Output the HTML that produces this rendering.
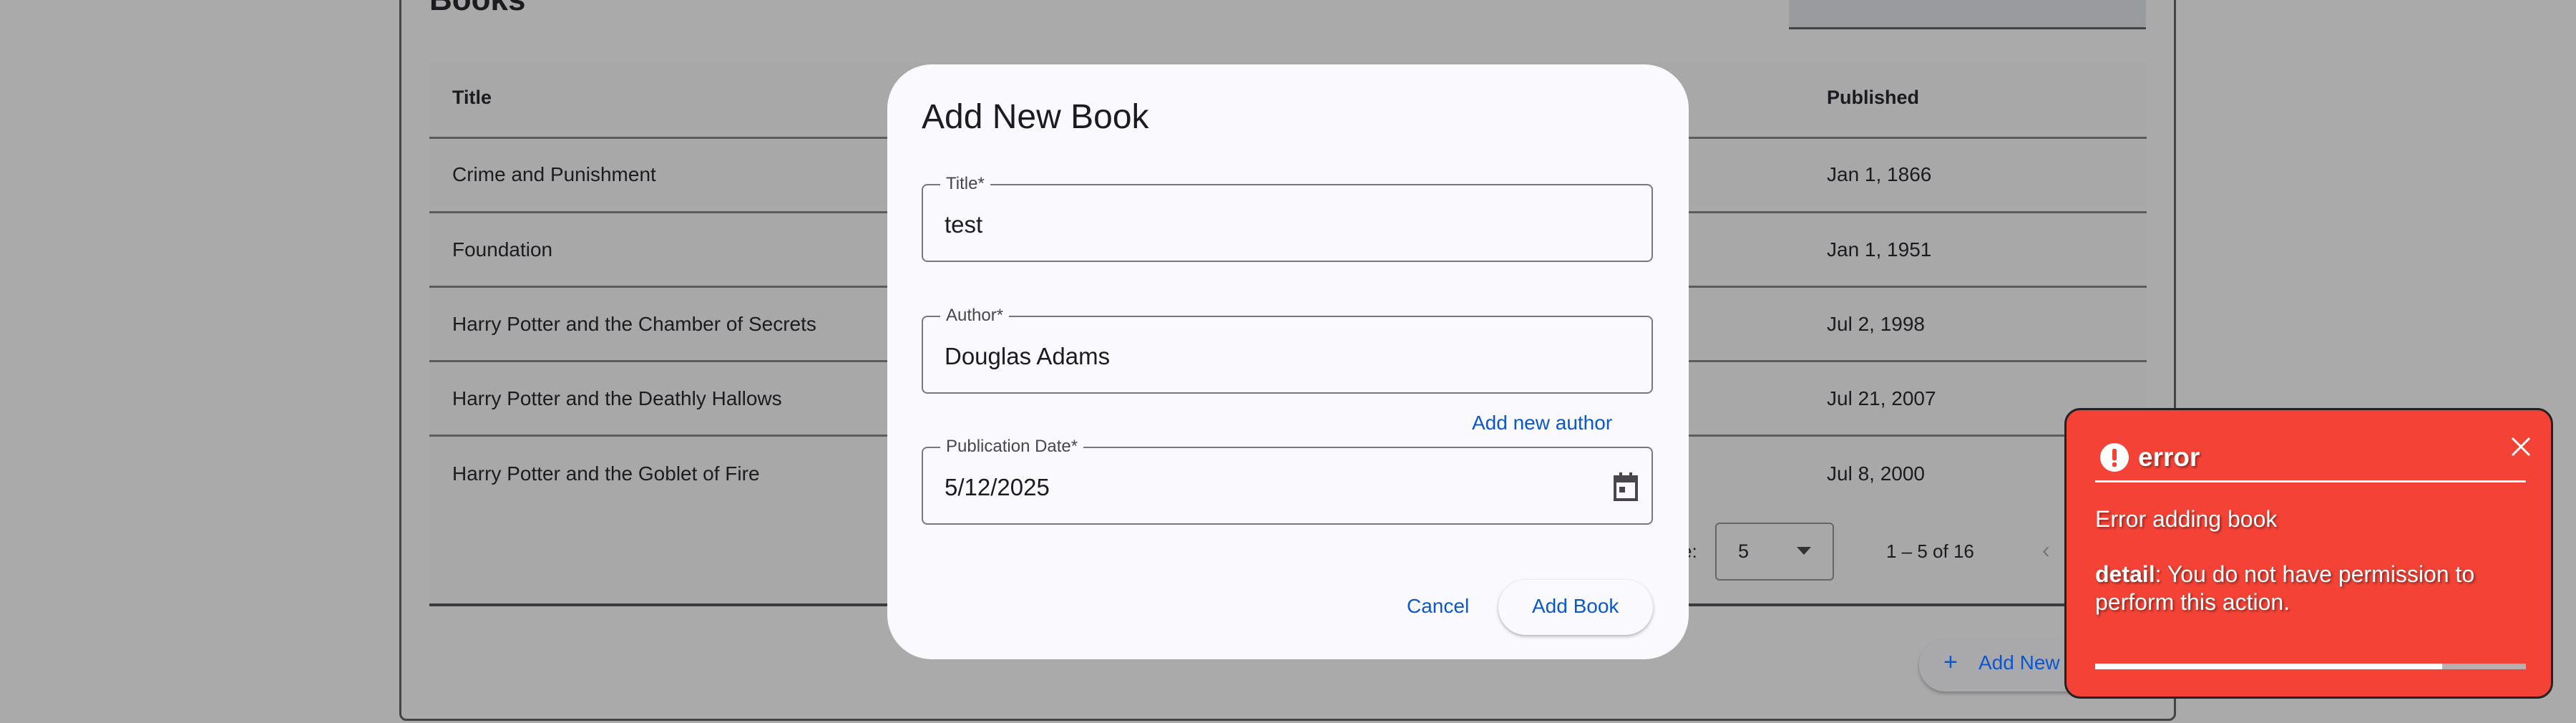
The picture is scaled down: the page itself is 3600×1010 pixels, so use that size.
<!DOCTYPE html>
<html><head><meta charset="utf-8"><style>
*{box-sizing:border-box;margin:0;padding:0}
body{width:3600px;height:1010px;background:#aaaaaa;position:relative;overflow:hidden;font-family:"Liberation Sans",sans-serif;color:#1c1b1f}
.abs{position:absolute}
.card{left:558px;top:-20px;width:2483px;height:1027px;border:3px solid #444;border-radius:10px}
.row{position:absolute;left:600px;width:2400px;border-bottom:3px solid #5c5c60}
.t{position:absolute;font-size:28px;white-space:nowrap;line-height:1}
.dlg{left:1240px;top:90px;width:1120px;height:831px;background:#f9f9fe;border-radius:62px}
.fld{position:absolute;left:48px;width:1022px;height:109px;border:2px solid #7a777f;border-radius:8px}
.lbl{position:absolute;left:24px;top:-15px;background:#f9f9fe;padding:0 8px;font-size:24px;color:#49454f;line-height:26px}
.val{position:absolute;left:30px;top:36px;font-size:33px;color:#1c1b1f}
.blue{color:#0b57d0}
.toast{left:2885px;top:570px;width:683px;height:406px;background:#f44336;border:3px solid #222;border-radius:22px;color:#fff}
.toast .s{text-shadow:2px 2px 3px rgba(0,0,0,.45)}
</style></head><body>
<div class="abs card"></div>
<div class="t" style="left:600px;top:-22px;font-size:44px;font-weight:bold">Books</div>
<div class="abs" style="left:2500px;top:0;width:499px;height:41px;background:#9a9b9f;border-bottom:3px solid #444"></div>
<div class="abs" style="left:600px;top:87px;width:2400px;height:758px;background:#a8a8a9"></div>
<div class="row" style="top:87px;height:107px"></div>
<div class="row" style="top:194px;height:104px"></div>
<div class="row" style="top:298px;height:104px"></div>
<div class="row" style="top:402px;height:104px"></div>
<div class="row" style="top:506px;height:104px"></div>
<div class="abs" style="left:600px;top:843px;width:2400px;height:4px;background:#3c3c40"></div>
<div class="t" style="left:632px;top:123px;font-weight:bold;font-size:27px">Title</div>
<div class="t" style="left:2553px;top:123px;font-weight:bold;font-size:27px">Published</div>
<div class="t" style="left:632px;top:230px">Crime and Punishment</div>
<div class="t" style="left:632px;top:335px">Foundation</div>
<div class="t" style="left:632px;top:439px">Harry Potter and the Chamber of Secrets</div>
<div class="t" style="left:632px;top:543px">Harry Potter and the Deathly Hallows</div>
<div class="t" style="left:632px;top:648px">Harry Potter and the Goblet of Fire</div>
<div class="t" style="left:2553px;top:230px">Jan 1, 1866</div>
<div class="t" style="left:2553px;top:335px">Jan 1, 1951</div>
<div class="t" style="left:2553px;top:439px">Jul 2, 1998</div>
<div class="t" style="left:2553px;top:543px">Jul 21, 2007</div>
<div class="t" style="left:2553px;top:648px">Jul 8, 2000</div>
<div class="t" style="left:2350px;top:757px;font-size:26px">e:</div>
<div class="abs" style="left:2397px;top:730px;width:166px;height:81px;border:2px solid #666;border-radius:6px"></div>
<div class="t" style="left:2429px;top:757px;font-size:27px">5</div>
<div class="abs" style="left:2511px;top:764px;width:0;height:0;border-left:10px solid transparent;border-right:10px solid transparent;border-top:11px solid #333"></div>
<div class="t" style="left:2636px;top:757px;font-size:26px">1 – 5 of 16</div>
<div class="t" style="left:2854px;top:752px;font-size:32px;color:#777">&#8249;</div>
<div class="abs" style="left:2682px;top:893px;width:300px;height:73px;border-radius:37px;background:#a9a9ab;box-shadow:0 3px 5px rgba(0,0,0,.25)"></div>
<div class="t blue" style="left:2716px;top:908px;font-size:34px">+</div>
<div class="t blue" style="left:2765px;top:912px;font-size:28px">Add New</div>

<div class="abs dlg">
 <div class="t" style="left:48px;top:50px;font-size:48px">Add New Book</div>
 <div class="fld" style="top:167px;height:109px"><div class="lbl">Title*</div><div class="val">test</div></div>
 <div class="fld" style="top:351px;height:109px"><div class="lbl">Author*</div><div class="val">Douglas Adams</div></div>
 <div class="t blue" style="left:817px;top:487px;font-size:28px">Add new author</div>
 <div class="fld" style="top:534px;height:109px"><div class="lbl">Publication Date*</div><div class="val">5/12/2025</div>
  <svg style="position:absolute;left:961px;top:32px" width="42" height="44" viewBox="0 0 21 22"><path d="M3 4h15v16H3z" fill="none" stroke="#49454f" stroke-width="2"/><path d="M3 4h15v4H3z" fill="#49454f"/><rect x="6" y="1" width="2" height="4" fill="#49454f"/><rect x="13" y="1" width="2" height="4" fill="#49454f"/><rect x="6" y="11" width="4" height="4" fill="#49454f"/></svg>
 </div>
 <div class="t blue" style="left:726px;top:743px;font-size:28px">Cancel</div>
 <div class="abs" style="left:854px;top:720px;width:216px;height:77px;border-radius:39px;background:#f9f9fe;box-shadow:0 2px 5px rgba(0,0,0,.3)"></div>
 <div class="t blue" style="left:901px;top:743px;font-size:28px">Add Book</div>
</div>

<div class="abs toast">
 <svg class="abs" style="left:46px;top:45px" width="42" height="42" viewBox="0 0 42 42"><circle cx="21" cy="21" r="20" fill="#fff"/><rect x="18" y="9" width="6" height="16" rx="2" fill="#f44336"/><rect x="18" y="28" width="6" height="6" rx="2" fill="#f44336"/></svg>
 <div class="t s" style="left:100px;top:47px;font-size:37px;font-weight:bold">error</div>
 <svg class="abs" style="left:620px;top:36px" width="30" height="30" viewBox="0 0 30 30"><path d="M3 3L27 27M27 3L3 27" stroke="#fff" stroke-width="3"/></svg>
 <div class="abs" style="left:40px;top:98px;width:602px;height:3px;background:#fff"></div>
 <div class="t s" style="left:40px;top:136px;font-size:32px">Error adding book</div>
 <div class="t s" style="left:40px;top:213px;font-size:32px"><b>detail</b>: You do not have permission to</div>
 <div class="t s" style="left:40px;top:252px;font-size:32px">perform this action.</div>
 <div class="abs" style="left:40px;top:354px;width:602px;height:8px;background:#b8b0b0"></div>
 <div class="abs" style="left:40px;top:354px;width:485px;height:8px;background:#fff"></div>
</div>
</body></html>
